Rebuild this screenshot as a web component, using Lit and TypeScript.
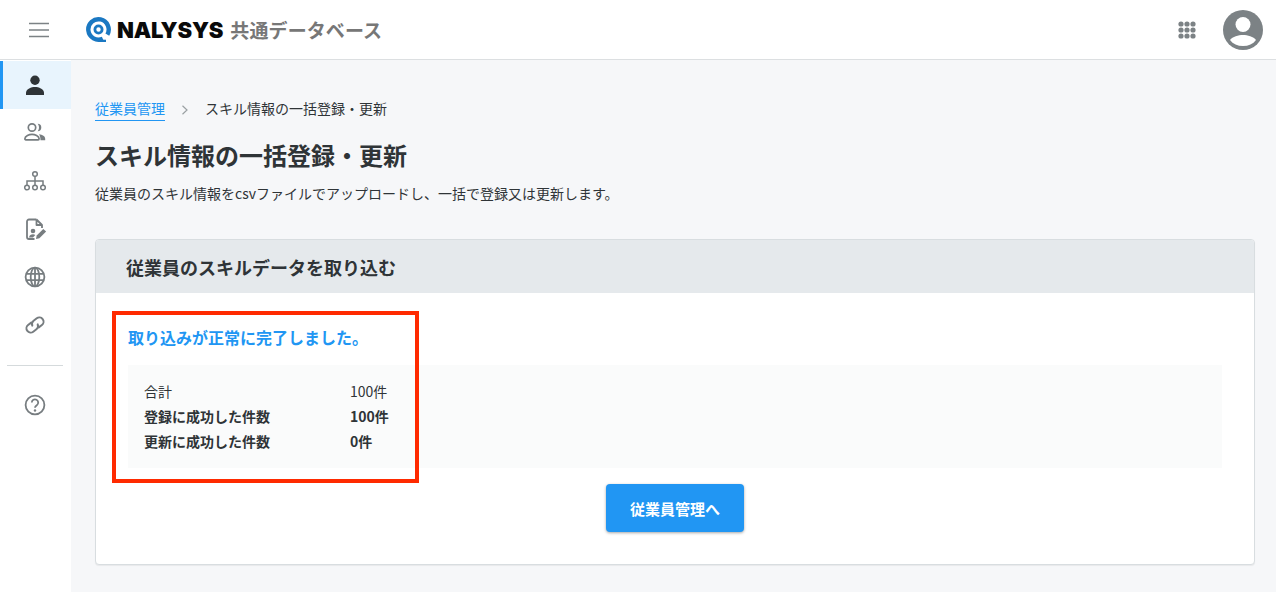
import { LitElement, html, css, svg } from "lit";
import { customElement } from "lit/decorators.js";

const navIcons = [
  svg`<circle cx="12" cy="7.300" r="4.700" fill="#2f3437"/><path d="M3 22v-2.400c0-3.700 5.400-5.700 9-5.700s9 2 9 5.700V22z" fill="#2f3437"/>`,
  svg`<circle cx="9" cy="6.500" r="3.700" fill="none" stroke="#777d80" stroke-width="1.700"/><path d="M2.800 18.800c-.6 0-.9-.4-.9-1 0-2.900 4.400-4.500 7.100-4.500s7.100 1.600 7.100 4.500c0 .6-.3 1-.9 1z" fill="none" stroke="#777d80" stroke-width="1.700"/><path d="M14.600 2.800a3.700 3.700 0 1 1 0 7.400c.9-1 1.400-2.300 1.400-3.700s-.5-2.700-1.400-3.700z" fill="#777d80"/><path d="M16 13.200c3.500.4 6.200 2 6.200 4.600v1.400h-4.700c0-2.500-.4-4.300-1.500-6z" fill="#777d80"/>`,
  svg`<g fill="none" stroke="#777d80" stroke-width="1.500"><circle cx="12" cy="5" r="2.300"/><circle cx="4" cy="18.500" r="2.300"/><circle cx="12" cy="18.500" r="2.300"/><circle cx="20" cy="18.500" r="2.300"/><path d="M12 7.300V16.200M4 16.200V12H20V16.200"/></g>`,
  svg`<path d="M13.500 2.500H6a2 2 0 0 0-2 2v15.500a2 2 0 0 0 2 2h5.500M13.500 2.500V8H19V11M13.500 2.500 19 8" fill="none" stroke="#777d80" stroke-width="1.800" stroke-linejoin="round"/><circle cx="10" cy="14" r="2.300" fill="#777d80"/><path d="M6 20.500c.3-2 2-3.200 4-3.200 .9 0 1.700.2 2.300.7l-2.300 2.500z" fill="#777d80"/><path d="M13 22l.7-3.400 6.600-6.700 2.800 2.700-6.700 6.700z" fill="#777d80"/>`,
  svg`<g fill="none" stroke="#777d80" stroke-width="1.800"><circle cx="12" cy="12" r="9.400"/><ellipse cx="12" cy="12" rx="4.300" ry="9.400"/><path d="M12 2.600V21.400M3 8.800H21M3 15.200H21"/></g>`,
  svg`<g fill="none" stroke="#777d80" stroke-width="2" stroke-linecap="round" transform="rotate(-38 12 12)"><path d="M10.500 7.800H6.500a4.200 4.200 0 0 0 0 8.400h4a4.200 4.200 0 0 0 4-3"/><path d="M13.500 16.200H17.500a4.200 4.200 0 0 0 0-8.400H13.500a4.200 4.200 0 0 0-4 3"/></g>`,
];

@customElement("app-root")
export class AppRoot extends LitElement {
  static styles = css`
    :host {
      display: block;
      width: 1276px;
      height: 592px;
      overflow: hidden;
      background: #f6f7f9;
      color: #2f3437;
      font-family: "Noto Sans CJK JP", "Noto Sans", sans-serif;
      font-size: 14px;
    }
    .header {
      height: 59px;
      background: #fff;
      border-bottom: 1px solid #dcdfe1;
      display: flex;
      align-items: center;
      padding: 0 13px 0 29px;
    }
    .burger { width: 20px; height: 16px; display: block; }
    .logo { display: flex; align-items: center; margin-left: 37px; }
    .mark { width: 25px; height: 25px; display: block; }
    .brand {
      font-family: Inter, "Liberation Sans", sans-serif;
      font-weight: 900;
      font-size: 22px;
      color: #0a0a0a;
      margin-left: 6px;
      letter-spacing: -0.150px;
    }
    .sub {
      font-weight: 700;
      font-size: 19px;
      letter-spacing: 0.100px;
      color: #777;
      margin-left: 7px;
    }
    .spacer { flex: 1; }
    .grid { width: 18px; height: 18px; display: block; margin-right: 27px; }
    .avatar { width: 40px; height: 40px; display: block; }
    .body { display: flex; height: 532px; }
    .side { width: 71px; background: #fff; flex: none; padding-top: 1px; }
    .nav {
      height: 48px;
      display: flex;
      align-items: center;
      justify-content: center;
      border-left: 3px solid transparent;
      padding-right: 4px;
      box-sizing: border-box;
    }
    .nav.active { background: #e8f4fd; border-left-color: #2196f3; }
    .nav svg { width: 24px; height: 24px; display: block; }
    .divider { height: 1px; background: #d5dadc; margin: 16px 8px 15px 7px; }
    .main { flex: 1; padding: 38px 21px 0 24px; min-width: 0; }
    .crumbs { display: flex; align-items: center; height: 23px; }
    .crumb-link {
      color: #2196f3;
      border-bottom: 1px solid #2196f3;
      line-height: 21px;
      height: 22px;
    }
    .chev { width: 8px; height: 10px; display: block; margin: 0 16px; }
    .crumb-cur { line-height: 21px; align-self: flex-start; }
    h1 {
      margin: 16px 0 0;
      font-size: 24px;
      font-weight: 700;
      line-height: 36px;
    }
    .desc { margin: 10px 0 0; line-height: 20px; }
    .card {
      margin-top: 36px;
      height: 326px;
      box-sizing: border-box;
      background: #fff;
      border: 1px solid #d8dde0;
      border-radius: 4px;
      position: relative;
      display: flex;
      flex-direction: column;
      box-shadow: 0 1px 1px rgba(0, 0, 0, 0.06);
    }
    .card-head {
      height: 53px;
      box-sizing: border-box;
      background: #e5e9ec;
      display: flex;
      align-items: center;
      padding-left: 30px;
      font-size: 18px;
      font-weight: 700;
      border-radius: 3px 3px 0 0;
    }
    .card-body { padding: 31px 32px 0; display: flex; flex-direction: column; }
    .done { color: #2196f3; font-size: 16px; font-weight: 700; line-height: 26px; }
    .panel {
      margin-top: 15px;
      height: 103px;
      box-sizing: border-box;
      background: #fafbfb;
      padding: 14px 16px;
    }
    .row { display: flex; line-height: 25px; height: 25px; }
    .row.bold { font-weight: 700; }
    .row .k { width: 206px; }
    .btn {
      align-self: center;
      margin-top: 16px;
      width: 138px;
      height: 48px;
      border: none;
      border-radius: 4px;
      background: #2196f3;
      color: #fff;
      font: 700 15px "Noto Sans CJK JP", sans-serif;
      box-shadow: 0 1px 3px rgba(0, 0, 0, 0.35);
      padding: 0;
    }
    .mark-box {
      position: absolute;
      left: 16px;
      top: 71px;
      width: 307px;
      height: 172px;
      box-sizing: border-box;
      border: 4px solid #ff2a00;
      pointer-events: none;
    }
  `;

  render() {
    return html`
      <div class="header">
        <svg class="burger" viewBox="0 0 20 16">
          <path d="M0 1.500H20M0 8H20M0 14.500H20" stroke="#7c8285" stroke-width="1.500"/>
        </svg>
        <div class="logo">
          <svg class="mark" viewBox="0 0 25 25">
            <path d="M16.800 21.700A10.200 10.200 0 1 1 21.300 17.600" fill="none" stroke="#1a78c2" stroke-width="4.400"/>
            <circle cx="12.500" cy="12.500" r="3.600" fill="none" stroke="#1a78c2" stroke-width="2.800"/>
            <path d="M13 22.700H20V25H13z" fill="#1a78c2"/>
          </svg>
          <span class="brand">NALYSYS</span>
          <span class="sub">共通データベース</span>
        </div>
        <div class="spacer"></div>
        <svg class="grid" viewBox="0 0 18 18" fill="#7c8285">
          ${[3, 9, 15].flatMap((y) => [3, 9, 15].map((x) => svg`<circle cx=${x} cy=${y} r="2.600"/>`))}
        </svg>
        <svg class="avatar" viewBox="0 0 40 40">
          <circle cx="20" cy="20" r="20" fill="#7c8285"/>
          <circle cx="20" cy="14.500" r="7.500" fill="#fff"/>
          <path d="M7 30C9.500 26.500 15.500 25 20 25s10.500 1.500 13 5C30 34 25.500 36 20 36S10 34 7 30z" fill="#fff"/>
        </svg>
      </div>
      <div class="body">
        <div class="side">
          ${navIcons.map(
            (icon, i) => html`<div class="nav ${i === 0 ? "active" : ""}">
              <svg viewBox="0 0 24 24">${icon}</svg>
            </div>`
          )}
          <div class="divider"></div>
          <div class="nav">
            <svg viewBox="0 0 24 24">
              <circle cx="12" cy="12" r="9.400" fill="none" stroke="#777d80" stroke-width="1.800"/>
              <path d="M8.800 9.500a3.200 3.200 0 1 1 5 2.700c-1.200.8-1.800 1.300-1.800 2.600" fill="none" stroke="#777d80" stroke-width="1.800"/>
              <circle cx="12" cy="17.500" r="1.200" fill="#777d80"/>
            </svg>
          </div>
        </div>
        <div class="main">
          <div class="crumbs">
            <span class="crumb-link">従業員管理</span>
            <svg class="chev" viewBox="0 0 8 10">
              <path d="M1.500 .8 6 5 1.500 9.200" fill="none" stroke="#9aa0a3" stroke-width="1.200"/>
            </svg>
            <span class="crumb-cur">スキル情報の一括登録・更新</span>
          </div>
          <h1>スキル情報の一括登録・更新</h1>
          <p class="desc">従業員のスキル情報をcsvファイルでアップロードし、一括で登録又は更新します。</p>
          <div class="card">
            <div class="card-head">従業員のスキルデータを取り込む</div>
            <div class="card-body">
              <div class="done">取り込みが正常に完了しました。</div>
              <div class="panel">
                <div class="row"><span class="k">合計</span><span>100件</span></div>
                <div class="row bold"><span class="k">登録に成功した件数</span><span>100件</span></div>
                <div class="row bold"><span class="k">更新に成功した件数</span><span>0件</span></div>
              </div>
              <button class="btn">従業員管理へ</button>
            </div>
            <div class="mark-box"></div>
          </div>
        </div>
      </div>
    `;
  }
}
